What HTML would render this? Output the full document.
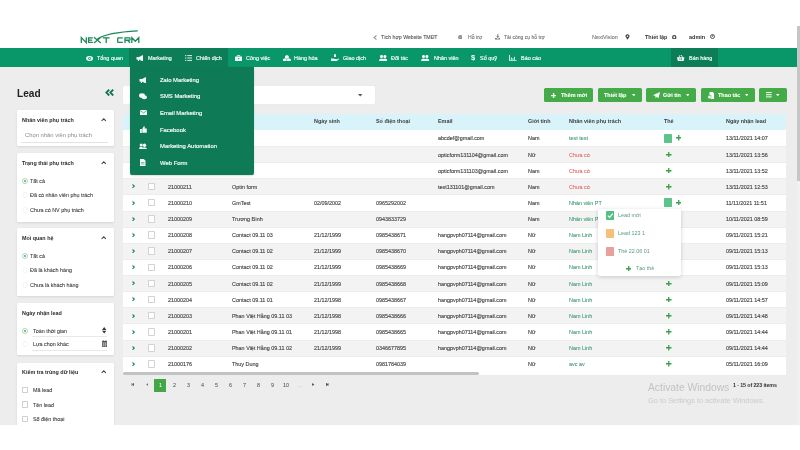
<!DOCTYPE html>
<html><head><meta charset="utf-8"><title>Lead</title>
<style>
html,body{margin:0;padding:0;}
body{width:800px;height:450px;overflow:hidden;position:relative;background:#fff;font-family:"Liberation Sans",sans-serif;}
.t{position:absolute;white-space:nowrap;line-height:1em;will-change:transform;}
.r{position:absolute;display:block;}
</style></head><body>
<div class="r" style="left:0.00px;top:26.00px;width:797.00px;height:22.00px;background:#fff;"></div>
<div class="r" style="left:0.00px;top:48.00px;width:797.00px;height:19.30px;background:#099668;"></div>
<div class="r" style="left:129.20px;top:48.00px;width:98.80px;height:19.30px;background:#0c7d57;"></div>
<div class="r" style="left:670.90px;top:48.00px;width:47.60px;height:19.30px;background:#0c7d57;"></div>
<div class="r" style="left:0.00px;top:67.30px;width:797.00px;height:357.30px;background:#ededed;"></div>
<div class="r" style="left:797.00px;top:26.00px;width:3.00px;height:398.60px;background:#f1f1f1;"></div>
<div class="r" style="left:797.30px;top:26.00px;width:2.70px;height:155.00px;background:#c6c6c6;"></div>
<svg class="r" style="left:78.00px;top:28.00px;" width="64" height="18" viewBox="0 0 64 18">
<path d="M19.8 10.8 Q 29 4.6 59.3 2.9" stroke="#1b8857" stroke-width="1.3" fill="none" stroke-linecap="round"/>
<g stroke="#1b8857" stroke-width="1.3" fill="none" transform="translate(0,9.3)">
<path d="M3.3 5.6 V0.3 L8.3 5.3 V0"/>
<path d="M14.8 0.55 H10.6 V5.05 H14.8 M10.6 2.8 H14.2"/>
<path d="M16 0 L22.8 5.6 M22.8 0 L16 5.6"/>
<path d="M24.8 0.55 H31.6 M28.2 0.55 V5.6"/>
<path d="M44.8 0.55 H40.4 Q39.7 0.55 39.7 1.2 V4.4 Q39.7 5.05 40.4 5.05 H44.8"/>
<path d="M47 5.6 V0.55 H51.3 Q52 0.55 52 1.2 V2.3 Q52 2.95 51.3 2.95 H47 M49.6 2.95 L52 5.6"/>
<path d="M53.8 5.6 V0.4 L57.3 4 L60.8 0.4 V5.6"/>
</g></svg>
<div class="t" style="left:380.60px;top:34.80px;font-size:5.2px;color:#5a5a5a;font-weight:400;-webkit-text-stroke:0.12px #5a5a5a;">Tích hợp Website TMĐT</div>
<svg class="r" style="left:372.50px;top:34.50px;" width="4" height="5" viewBox="0 0 4 5"><path d="M3.5 0.5 L1 2.5 L3.5 4.5" stroke="#999" stroke-width="1.1" fill="none"/></svg>
<svg class="r" style="left:457.80px;top:34.60px;" width="4.6" height="4.6" viewBox="0 0 4.6 4.6"><circle cx="2.3" cy="2.3" r="2.2" fill="#8d8d9c"/><path d="M1.2 2.4 H3.4" stroke="#c9c9d4" stroke-width="0.5"/></svg>
<div class="t" style="left:468.00px;top:34.88px;font-size:5.1px;color:#777;font-weight:400;-webkit-text-stroke:0.12px #777;">Hỗ trợ</div>
<svg class="r" style="left:494.60px;top:34.20px;" width="5.6" height="5.4" viewBox="0 0 5.6 5.4"><path d="M2.3 0 H3.3 V2.2 H4.5 L2.8 3.9 L1.1 2.2 H2.3 Z M0 3.9 H1.5 L2.8 5 L4.1 3.9 H5.6 V5.4 H0 Z" fill="#7a7a86"/></svg>
<div class="t" style="left:504.40px;top:34.93px;font-size:5.05px;color:#777;font-weight:400;-webkit-text-stroke:0.12px #777;">Tải công cụ hỗ trợ</div>
<div class="t" style="left:591.60px;top:34.63px;font-size:5.4px;color:#777;font-weight:400;-webkit-text-stroke:0.1px #777;">NextVision</div>
<svg class="r" style="left:624.50px;top:34.00px;" width="5" height="6" viewBox="0 0 5 6"><path d="M2.5 5.8 L0.6 2.8 A2 2 0 1 1 4.4 2.8 Z" fill="#444"/><circle cx="2.5" cy="2.2" r="0.8" fill="#fff"/></svg>
<div class="t" style="left:644.70px;top:34.59px;font-size:5.45px;color:#333;font-weight:700;">Thiết lập</div>
<svg class="r" style="left:672.00px;top:34.50px;" width="4.5" height="4.5" viewBox="0 0 4.5 4.5"><circle cx="2.25" cy="2.25" r="1.6" stroke="#444" stroke-width="1.2" fill="none"/></svg>
<div class="t" style="left:689.00px;top:34.54px;font-size:5.5px;color:#333;font-weight:700;">admin</div>
<svg class="r" style="left:709.50px;top:34.30px;" width="5" height="5" viewBox="0 0 5 5"><circle cx="2.5" cy="2.5" r="2" stroke="#444" stroke-width="0.9" fill="none"/><circle cx="2.5" cy="2" r="0.8" fill="#444"/></svg>
<div class="t" style="left:97.30px;top:55.79px;font-size:5.45px;color:#e9f8f0;font-weight:400;-webkit-text-stroke:0.2px #e9f8f0;">Tổng quan</div>
<div class="t" style="left:147.90px;top:55.79px;font-size:5.45px;color:#e9f8f0;font-weight:400;-webkit-text-stroke:0.2px #e9f8f0;">Marketing</div>
<div class="t" style="left:195.80px;top:55.79px;font-size:5.45px;color:#e9f8f0;font-weight:400;-webkit-text-stroke:0.2px #e9f8f0;">Chiến dịch</div>
<div class="t" style="left:245.60px;top:55.79px;font-size:5.45px;color:#e9f8f0;font-weight:400;-webkit-text-stroke:0.2px #e9f8f0;">Công việc</div>
<div class="t" style="left:293.50px;top:55.79px;font-size:5.45px;color:#e9f8f0;font-weight:400;-webkit-text-stroke:0.2px #e9f8f0;">Hàng hóa</div>
<div class="t" style="left:342.60px;top:55.79px;font-size:5.45px;color:#e9f8f0;font-weight:400;-webkit-text-stroke:0.2px #e9f8f0;">Giao dịch</div>
<div class="t" style="left:391.20px;top:55.79px;font-size:5.45px;color:#e9f8f0;font-weight:400;-webkit-text-stroke:0.2px #e9f8f0;">Đối tác</div>
<div class="t" style="left:433.90px;top:55.79px;font-size:5.45px;color:#e9f8f0;font-weight:400;-webkit-text-stroke:0.2px #e9f8f0;">Nhân viên</div>
<div class="t" style="left:479.80px;top:55.79px;font-size:5.45px;color:#e9f8f0;font-weight:400;-webkit-text-stroke:0.2px #e9f8f0;">Sổ quỹ</div>
<div class="t" style="left:520.50px;top:55.79px;font-size:5.45px;color:#e9f8f0;font-weight:400;-webkit-text-stroke:0.2px #e9f8f0;">Báo cáo</div>
<div class="t" style="left:688.75px;top:55.79px;font-size:5.45px;color:#e9f8f0;font-weight:400;-webkit-text-stroke:0.2px #e9f8f0;">Bán hàng</div>
<svg class="r" style="left:85.60px;top:55.60px;" width="7.2" height="5" viewBox="0 0 7.2 5"><ellipse cx="3.6" cy="2.5" rx="3.5" ry="2.4" fill="#f4fbf7"/><circle cx="3.6" cy="2.5" r="1.5" fill="#099668"/><circle cx="3.6" cy="2.5" r="0.8" fill="#f4fbf7"/></svg>
<svg class="r" style="left:136.10px;top:54.90px;" width="8" height="6.5" viewBox="0 0 8 6.5"><path d="M0.5 2 H3 L7 0 V6.5 L3 4.5 H0.5 Z M1.5 4.5 L2.3 6.5 H3.3 L2.8 4.5 Z" fill="#f4fbf7"/></svg>
<svg class="r" style="left:185.00px;top:54.90px;" width="7" height="6" viewBox="0 0 7 6"><path d="M0 0.6 H1.3 M2.3 0.6 H7 M0 3 H1.3 M2.3 3 H7 M0 5.4 H1.3 M2.3 5.4 H7" stroke="#f4fbf7" stroke-width="0.9"/></svg>
<svg class="r" style="left:234.80px;top:54.90px;" width="7.2" height="6.5" viewBox="0 0 7.2 6.5"><path d="M2.3 1.4 V0.5 H4.9 V1.4" stroke="#f4fbf7" stroke-width="0.8" fill="none"/><rect x="0" y="1.4" width="7.2" height="5" rx="0.6" fill="#f4fbf7"/><rect x="3" y="3.2" width="1.2" height="1" fill="#099668"/></svg>
<svg class="r" style="left:282.80px;top:54.60px;" width="7.8" height="6.8" viewBox="0 0 7.8 6.8"><path d="M3.9 0 L5.8 0.9 V2.9 L3.9 3.8 L2 2.9 V0.9 Z M1.9 3.2 L3.7 4 V6 L1.9 6.8 L0 6 V4 Z M5.9 3.2 L7.8 4 V6 L5.9 6.8 L4.1 6 V4 Z" fill="#f4fbf7"/></svg>
<svg class="r" style="left:330.50px;top:54.40px;" width="8.2" height="7.2" viewBox="0 0 8.2 7.2"><path d="M3.1 0.3 H5 V2.9 H3.1 Z" fill="#f4fbf7"/><path d="M0 4.4 H2.3 Q3.3 4.4 3.8 5 H5.3 Q6 5 5.9 5.6 L7.6 4.6 Q8.3 4.5 8 5.2 L5.8 7 H0 Z" fill="#f4fbf7"/></svg>
<svg class="r" style="left:378.70px;top:54.90px;" width="8.3" height="6.2" viewBox="0 0 8.3 6.2"><circle cx="2.5" cy="1.6" r="1.5" fill="#f4fbf7"/><circle cx="5.9" cy="1.6" r="1.5" fill="#f4fbf7"/><path d="M0 6.2 Q0 3.6 2.5 3.6 Q5 3.6 5 6.2 Z M3.5 6.2 Q3.5 3.6 5.9 3.6 Q8.3 3.6 8.3 6.2 Z" fill="#f4fbf7"/></svg>
<svg class="r" style="left:421.40px;top:54.90px;" width="8.3" height="6.2" viewBox="0 0 8.3 6.2"><circle cx="2.5" cy="1.6" r="1.5" fill="#f4fbf7"/><circle cx="5.9" cy="1.6" r="1.5" fill="#f4fbf7"/><path d="M0 6.2 Q0 3.6 2.5 3.6 Q5 3.6 5 6.2 Z M3.5 6.2 Q3.5 3.6 5.9 3.6 Q8.3 3.6 8.3 6.2 Z" fill="#f4fbf7"/></svg>
<div class="t" style="left:471.20px;top:54.47px;font-size:7.6px;color:#fff;font-weight:700;">$</div>
<svg class="r" style="left:508.90px;top:54.80px;" width="7.7" height="6.2" viewBox="0 0 7.7 6.2"><path d="M0.5 0 V5.7 H7.7" stroke="#f4fbf7" stroke-width="0.9" fill="none"/><path d="M2.3 4.8 V2.6 M3.9 4.8 V3.3 M5.5 4.8 V1.8" stroke="#f4fbf7" stroke-width="1"/></svg>
<svg class="r" style="left:677.00px;top:54.90px;" width="7.5" height="6.2" viewBox="0 0 7.5 6.2"><path d="M0 2.3 H7.5 L6.6 6.2 H0.9 Z" fill="#f4fbf7"/><path d="M1.8 2.5 L3.2 0 M5.7 2.5 L4.3 0" stroke="#f4fbf7" stroke-width="0.8"/><rect x="2.6" y="3.3" width="0.7" height="1.8" fill="#0c7d57"/><rect x="4.2" y="3.3" width="0.7" height="1.8" fill="#0c7d57"/></svg>
<div class="t" style="left:16.90px;top:88.75px;font-size:10.1px;color:#222;font-weight:700;">Lead</div>
<svg class="r" style="left:104.80px;top:89.30px;" width="9" height="7.2" viewBox="0 0 9 7.2"><path d="M4.2 0.7 L1.4 3.6 L4.2 6.5 M8.2 0.7 L5.4 3.6 L8.2 6.5" stroke="#127452" stroke-width="1.9" fill="none"/></svg>
<div class="r" style="left:16.75px;top:110.00px;width:96.85px;height:36.40px;background:#fff;border-radius:1.5px;box-shadow:0 1px 2.5px rgba(0,0,0,0.10)"></div>
<div class="r" style="left:16.75px;top:153.00px;width:96.85px;height:68.80px;background:#fff;border-radius:1.5px;box-shadow:0 1px 2.5px rgba(0,0,0,0.10)"></div>
<div class="r" style="left:16.75px;top:228.40px;width:96.85px;height:68.00px;background:#fff;border-radius:1.5px;box-shadow:0 1px 2.5px rgba(0,0,0,0.10)"></div>
<div class="r" style="left:16.75px;top:303.40px;width:96.85px;height:52.00px;background:#fff;border-radius:1.5px;box-shadow:0 1px 2.5px rgba(0,0,0,0.10)"></div>
<div class="r" style="left:16.75px;top:362.80px;width:96.85px;height:77.20px;background:#fff;border-radius:1.5px;box-shadow:0 1px 2.5px rgba(0,0,0,0.10)"></div>
<div class="t" style="left:22.00px;top:117.93px;font-size:5.4px;color:#2a2a2a;font-weight:700;">Nhân viên phụ trách</div>
<svg class="r" style="left:100.50px;top:118.30px;" width="5.5" height="3.5" viewBox="0 0 5.5 3.5"><path d="M0.6 3 L2.75 0.8 L4.9 3" stroke="#444" stroke-width="1.05" fill="none"/></svg>
<div class="t" style="left:22.00px;top:161.03px;font-size:5.4px;color:#2a2a2a;font-weight:700;">Trạng thái phụ trách</div>
<svg class="r" style="left:100.50px;top:161.40px;" width="5.5" height="3.5" viewBox="0 0 5.5 3.5"><path d="M0.6 3 L2.75 0.8 L4.9 3" stroke="#444" stroke-width="1.05" fill="none"/></svg>
<div class="t" style="left:22.00px;top:235.83px;font-size:5.4px;color:#2a2a2a;font-weight:700;">Mối quan hệ</div>
<svg class="r" style="left:100.50px;top:236.20px;" width="5.5" height="3.5" viewBox="0 0 5.5 3.5"><path d="M0.6 3 L2.75 0.8 L4.9 3" stroke="#444" stroke-width="1.05" fill="none"/></svg>
<div class="t" style="left:22.00px;top:310.63px;font-size:5.4px;color:#2a2a2a;font-weight:700;">Ngày nhận lead</div>
<div class="t" style="left:22.00px;top:369.83px;font-size:5.4px;color:#2a2a2a;font-weight:700;">Kiểm tra trùng dữ liệu</div>
<svg class="r" style="left:100.50px;top:370.20px;" width="5.5" height="3.5" viewBox="0 0 5.5 3.5"><path d="M0.6 3 L2.75 0.8 L4.9 3" stroke="#444" stroke-width="1.05" fill="none"/></svg>
<div class="t" style="left:24.90px;top:133.35px;font-size:5.85px;color:#8a8a8a;font-weight:400;">Chọn nhân viên phụ trách</div>
<div class="r" style="left:21.30px;top:142.00px;width:87.10px;height:0.50px;background:#e3e3e3;"></div>
<svg class="r" style="left:22.00px;top:177.60px;" width="6" height="6" viewBox="0 0 6 6"><circle cx="3" cy="3" r="2.5" stroke="#8bc79c" stroke-width="0.7" fill="#fff"/><circle cx="3" cy="3" r="0.9" fill="#4a9a63"/></svg>
<div class="t" style="left:29.90px;top:178.53px;font-size:5.4px;color:#3a3a3a;font-weight:400;-webkit-text-stroke:0.08px #3a3a3a;">Tất cả</div>
<svg class="r" style="left:22.00px;top:192.30px;" width="6" height="6" viewBox="0 0 6 6"><circle cx="3" cy="3" r="2.5" stroke="#ececec" stroke-width="0.6" fill="#fff"/></svg>
<div class="t" style="left:29.90px;top:193.23px;font-size:5.4px;color:#3a3a3a;font-weight:400;-webkit-text-stroke:0.08px #3a3a3a;">Đã có nhân viên phụ trách</div>
<svg class="r" style="left:22.00px;top:206.90px;" width="6" height="6" viewBox="0 0 6 6"><circle cx="3" cy="3" r="2.5" stroke="#ececec" stroke-width="0.6" fill="#fff"/></svg>
<div class="t" style="left:29.90px;top:207.83px;font-size:5.4px;color:#3a3a3a;font-weight:400;-webkit-text-stroke:0.08px #3a3a3a;">Chưa có NV phụ trách</div>
<svg class="r" style="left:22.00px;top:252.60px;" width="6" height="6" viewBox="0 0 6 6"><circle cx="3" cy="3" r="2.5" stroke="#8bc79c" stroke-width="0.7" fill="#fff"/><circle cx="3" cy="3" r="0.9" fill="#4a9a63"/></svg>
<div class="t" style="left:29.90px;top:253.53px;font-size:5.4px;color:#3a3a3a;font-weight:400;-webkit-text-stroke:0.08px #3a3a3a;">Tất cả</div>
<svg class="r" style="left:22.00px;top:267.30px;" width="6" height="6" viewBox="0 0 6 6"><circle cx="3" cy="3" r="2.5" stroke="#ececec" stroke-width="0.6" fill="#fff"/></svg>
<div class="t" style="left:29.90px;top:268.23px;font-size:5.4px;color:#3a3a3a;font-weight:400;-webkit-text-stroke:0.08px #3a3a3a;">Đã là khách hàng</div>
<svg class="r" style="left:22.00px;top:281.90px;" width="6" height="6" viewBox="0 0 6 6"><circle cx="3" cy="3" r="2.5" stroke="#ececec" stroke-width="0.6" fill="#fff"/></svg>
<div class="t" style="left:29.90px;top:282.83px;font-size:5.4px;color:#3a3a3a;font-weight:400;-webkit-text-stroke:0.08px #3a3a3a;">Chưa là khách hàng</div>
<svg class="r" style="left:22.00px;top:327.60px;" width="6" height="6" viewBox="0 0 6 6"><circle cx="3" cy="3" r="2.5" stroke="#8bc79c" stroke-width="0.7" fill="#fff"/><circle cx="3" cy="3" r="0.9" fill="#4a9a63"/></svg>
<div class="t" style="left:33.10px;top:328.53px;font-size:5.4px;color:#3a3a3a;font-weight:400;-webkit-text-stroke:0.08px #3a3a3a;">Toàn thời gian</div>
<svg class="r" style="left:22.00px;top:340.90px;" width="6" height="6" viewBox="0 0 6 6"><circle cx="3" cy="3" r="2.5" stroke="#ececec" stroke-width="0.6" fill="#fff"/></svg>
<div class="t" style="left:33.10px;top:341.83px;font-size:5.4px;color:#3a3a3a;font-weight:400;-webkit-text-stroke:0.08px #3a3a3a;">Lựa chọn khác</div>
<div class="r" style="left:32.20px;top:336.00px;width:75.20px;height:0.50px;background:#e8e8e8;"></div>
<div class="r" style="left:32.20px;top:349.60px;width:75.20px;height:0.50px;background:#e8e8e8;"></div>
<svg class="r" style="left:102.20px;top:327.40px;" width="4.4" height="6.6" viewBox="0 0 4.4 6.6"><path d="M0 2.9 L2.2 0 L4.4 2.9 Z M0 3.7 L2.2 6.6 L4.4 3.7 Z" fill="#3a3a3a"/></svg>
<svg class="r" style="left:102.20px;top:340.20px;" width="5.2" height="7" viewBox="0 0 5.2 7"><rect x="0" y="1" width="5.2" height="6" fill="#555"/><path d="M0 3 H5.2 M0 5 H5.2 M1.7 2.5 V7 M3.5 2.5 V7" stroke="#fff" stroke-width="0.4"/><path d="M1.3 0 V1.5 M3.9 0 V1.5" stroke="#555" stroke-width="0.7"/></svg>
<div class="r" style="left:21.70px;top:386.60px;width:6.70px;height:6.80px;background:#fff;box-sizing:border-box;border:0.6px solid #cfcfcf;border-radius:0.8px"></div>
<div class="t" style="left:32.50px;top:387.93px;font-size:5.4px;color:#3a3a3a;font-weight:400;-webkit-text-stroke:0.08px #3a3a3a;">Mã lead</div>
<div class="r" style="left:21.70px;top:401.40px;width:6.70px;height:6.80px;background:#fff;box-sizing:border-box;border:0.6px solid #cfcfcf;border-radius:0.8px"></div>
<div class="t" style="left:32.50px;top:402.73px;font-size:5.4px;color:#3a3a3a;font-weight:400;-webkit-text-stroke:0.08px #3a3a3a;">Tên lead</div>
<div class="r" style="left:21.70px;top:415.70px;width:6.70px;height:6.80px;background:#fff;box-sizing:border-box;border:0.6px solid #cfcfcf;border-radius:0.8px"></div>
<div class="t" style="left:32.50px;top:417.03px;font-size:5.4px;color:#3a3a3a;font-weight:400;-webkit-text-stroke:0.08px #3a3a3a;">Số điện thoại</div>
<div class="r" style="left:123.00px;top:85.60px;width:252.00px;height:18.00px;background:#fff;border-radius:1.5px;box-shadow:0 0 0.8px rgba(0,0,0,0.12)"></div>
<svg class="r" style="left:358.30px;top:94.00px;" width="4.4" height="2.6" viewBox="0 0 4.4 2.6"><path d="M0 0 H4.4 L2.2 2.6 Z" fill="#555"/></svg>
<div class="r" style="left:544.40px;top:88.00px;width:48.50px;height:13.80px;background:#45ab49;border-radius:1.6px"></div>
<svg class="r" style="left:551.20px;top:92.60px;" width="5.2" height="5.2" viewBox="0 0 5.2 5.2"><path d="M2.6 0 V5.2 M0 2.6 H5.2" stroke="#fff" stroke-width="1.4"/></svg>
<div class="t" style="left:561.30px;top:93.29px;font-size:5.45px;color:#fff;font-weight:700;-webkit-text-stroke:0.08px #fff;">Thêm mới</div>
<div class="r" style="left:597.75px;top:88.00px;width:43.75px;height:13.80px;background:#45ab49;border-radius:1.6px"></div>
<div class="t" style="left:604.40px;top:93.29px;font-size:5.45px;color:#fff;font-weight:700;-webkit-text-stroke:0.08px #fff;">Thiết lập</div>
<svg class="r" style="left:631.50px;top:94.20px;" width="3.6" height="2.2" viewBox="0 0 3.6 2.2"><path d="M0 0 H3.6 L1.8 2.2 Z" fill="#fff"/></svg>
<div class="r" style="left:646.20px;top:88.00px;width:49.70px;height:13.80px;background:#45ab49;border-radius:1.6px"></div>
<svg class="r" style="left:652.50px;top:91.80px;" width="7" height="6.5" viewBox="0 0 7 6.5"><path d="M7 0 L0 3.3 L2.4 4 L2.6 6.5 L3.8 4.8 L5.5 6.2 Z" fill="#fff"/></svg>
<div class="t" style="left:663.00px;top:93.29px;font-size:5.45px;color:#fff;font-weight:700;-webkit-text-stroke:0.08px #fff;">Gửi tin</div>
<svg class="r" style="left:685.60px;top:94.20px;" width="3.6" height="2.2" viewBox="0 0 3.6 2.2"><path d="M0 0 H3.6 L1.8 2.2 Z" fill="#fff"/></svg>
<div class="r" style="left:700.50px;top:88.00px;width:54.30px;height:13.80px;background:#45ab49;border-radius:1.6px"></div>
<svg class="r" style="left:707.70px;top:91.50px;" width="6.5" height="7.5" viewBox="0 0 6.5 7.5"><path d="M1.5 0 H4.8 L6.3 1.5 V7.5 H1.5 Z" fill="#fff"/><rect x="0" y="3.5" width="3" height="3" fill="#fff" stroke="#45ab49" stroke-width="0.5"/></svg>
<div class="t" style="left:718.00px;top:93.29px;font-size:5.45px;color:#fff;font-weight:700;-webkit-text-stroke:0.08px #fff;">Thao tác</div>
<svg class="r" style="left:744.50px;top:94.20px;" width="3.6" height="2.2" viewBox="0 0 3.6 2.2"><path d="M0 0 H3.6 L1.8 2.2 Z" fill="#fff"/></svg>
<div class="r" style="left:759.40px;top:88.00px;width:27.30px;height:13.80px;background:#45ab49;border-radius:1.6px"></div>
<svg class="r" style="left:765.90px;top:92.30px;" width="5.7" height="5.5" viewBox="0 0 5.7 5.5"><path d="M0 0.6 H5.7 M0 2.75 H5.7 M0 4.9 H5.7" stroke="#fff" stroke-width="1"/></svg>
<svg class="r" style="left:776.30px;top:94.20px;" width="3.6" height="2.2" viewBox="0 0 3.6 2.2"><path d="M0 0 H3.6 L1.8 2.2 Z" fill="#fff"/></svg>
<div class="r" style="left:123.00px;top:113.50px;width:663.25px;height:261.50px;background:#fff;"></div>
<div class="r" style="left:123.00px;top:113.50px;width:663.25px;height:16.70px;background:#d9f3fb;"></div>
<div class="t" style="left:168.00px;top:119.21px;font-size:5.42px;color:#3c3c3c;font-weight:700;">Mã lead</div>
<div class="t" style="left:231.75px;top:119.21px;font-size:5.42px;color:#3c3c3c;font-weight:700;">Tên lead</div>
<div class="t" style="left:313.75px;top:119.21px;font-size:5.42px;color:#3c3c3c;font-weight:700;">Ngày sinh</div>
<div class="t" style="left:376.25px;top:119.21px;font-size:5.42px;color:#3c3c3c;font-weight:700;">Số điện thoại</div>
<div class="t" style="left:437.50px;top:119.21px;font-size:5.42px;color:#3c3c3c;font-weight:700;">Email</div>
<div class="t" style="left:528.25px;top:119.21px;font-size:5.42px;color:#3c3c3c;font-weight:700;">Giới tính</div>
<div class="t" style="left:569.25px;top:119.21px;font-size:5.42px;color:#3c3c3c;font-weight:700;">Nhân viên phụ trách</div>
<div class="t" style="left:663.75px;top:119.21px;font-size:5.42px;color:#3c3c3c;font-weight:700;">Thẻ</div>
<div class="t" style="left:725.75px;top:119.21px;font-size:5.42px;color:#3c3c3c;font-weight:700;">Ngày nhận lead</div>
<svg class="r" style="left:131.80px;top:136.06px;" width="3" height="4.4" viewBox="0 0 3 4.4"><path d="M0.5 0.5 L2.3 2.2 L0.5 3.9" stroke="#23806b" stroke-width="1.1" fill="none"/></svg>
<div class="r" style="left:147.50px;top:134.56px;width:7.50px;height:7.40px;background:#fff;box-sizing:border-box;border:0.6px solid #d3d3d3;border-radius:0.8px"></div>
<div class="t" style="left:167.50px;top:136.38px;font-size:5.42px;color:#444444;font-weight:400;-webkit-text-stroke:0.13px #444444;">21000213</div>
<div class="t" style="left:231.75px;top:136.38px;font-size:5.42px;color:#444444;font-weight:400;-webkit-text-stroke:0.13px #444444;">Optic</div>
<div class="t" style="left:437.50px;top:136.38px;font-size:5.42px;color:#444444;font-weight:400;-webkit-text-stroke:0.13px #444444;">abcdef@gmail.com</div>
<div class="t" style="left:528.25px;top:136.38px;font-size:5.42px;color:#444444;font-weight:400;-webkit-text-stroke:0.13px #444444;">Nam</div>
<div class="t" style="left:569.25px;top:136.38px;font-size:5.42px;color:#3f9a70;font-weight:400;-webkit-text-stroke:0.08px #3f9a70;">test test</div>
<div class="r" style="left:664.20px;top:133.96px;width:8.20px;height:8.60px;background:#5cc48a;border-radius:0.8px"></div>
<svg class="r" style="left:675.80px;top:135.26px;" width="5.5" height="5.5" viewBox="0 0 5.5 5.5"><path d="M2.75 0 V5.5 M0 2.75 H5.5" stroke="#3aa04a" stroke-width="1.3"/></svg>
<div class="t" style="left:725.75px;top:136.38px;font-size:5.42px;color:#444444;font-weight:400;-webkit-text-stroke:0.13px #444444;">13/11/2021 14:07</div>
<div class="r" style="left:123.00px;top:146.33px;width:663.25px;height:16.13px;background:#f3f3f3;"></div>
<div class="r" style="left:123.00px;top:146.03px;width:663.25px;height:0.80px;background:#ededed;"></div>
<svg class="r" style="left:131.80px;top:152.19px;" width="3" height="4.4" viewBox="0 0 3 4.4"><path d="M0.5 0.5 L2.3 2.2 L0.5 3.9" stroke="#23806b" stroke-width="1.1" fill="none"/></svg>
<div class="r" style="left:147.50px;top:150.69px;width:7.50px;height:7.40px;background:#fff;box-sizing:border-box;border:0.6px solid #d3d3d3;border-radius:0.8px"></div>
<div class="t" style="left:167.50px;top:152.51px;font-size:5.42px;color:#444444;font-weight:400;-webkit-text-stroke:0.13px #444444;">21000212</div>
<div class="t" style="left:231.75px;top:152.51px;font-size:5.42px;color:#444444;font-weight:400;-webkit-text-stroke:0.13px #444444;">Optic</div>
<div class="t" style="left:437.50px;top:152.51px;font-size:5.42px;color:#444444;font-weight:400;-webkit-text-stroke:0.13px #444444;">opticform131104@gmail.com</div>
<div class="t" style="left:528.25px;top:152.51px;font-size:5.42px;color:#444444;font-weight:400;-webkit-text-stroke:0.13px #444444;">Nữ</div>
<div class="t" style="left:569.25px;top:152.51px;font-size:5.42px;color:#e06a6a;font-weight:400;-webkit-text-stroke:0.08px #e06a6a;">Chưa có</div>
<svg class="r" style="left:666.20px;top:151.79px;" width="5.5" height="5.5" viewBox="0 0 5.5 5.5"><path d="M2.75 0 V5.5 M0 2.75 H5.5" stroke="#3aa04a" stroke-width="1.3"/></svg>
<div class="t" style="left:725.75px;top:152.51px;font-size:5.42px;color:#444444;font-weight:400;-webkit-text-stroke:0.13px #444444;">13/11/2021 13:56</div>
<div class="r" style="left:123.00px;top:162.16px;width:663.25px;height:0.80px;background:#ededed;"></div>
<svg class="r" style="left:131.80px;top:168.32px;" width="3" height="4.4" viewBox="0 0 3 4.4"><path d="M0.5 0.5 L2.3 2.2 L0.5 3.9" stroke="#23806b" stroke-width="1.1" fill="none"/></svg>
<div class="r" style="left:147.50px;top:166.82px;width:7.50px;height:7.40px;background:#fff;box-sizing:border-box;border:0.6px solid #d3d3d3;border-radius:0.8px"></div>
<div class="t" style="left:167.50px;top:168.64px;font-size:5.42px;color:#444444;font-weight:400;-webkit-text-stroke:0.13px #444444;">21000212</div>
<div class="t" style="left:231.75px;top:168.64px;font-size:5.42px;color:#444444;font-weight:400;-webkit-text-stroke:0.13px #444444;">Optic</div>
<div class="t" style="left:437.50px;top:168.64px;font-size:5.42px;color:#444444;font-weight:400;-webkit-text-stroke:0.13px #444444;">opticform131103@gmail.com</div>
<div class="t" style="left:528.25px;top:168.64px;font-size:5.42px;color:#444444;font-weight:400;-webkit-text-stroke:0.13px #444444;">Nam</div>
<div class="t" style="left:569.25px;top:168.64px;font-size:5.42px;color:#e06a6a;font-weight:400;-webkit-text-stroke:0.08px #e06a6a;">Chưa có</div>
<svg class="r" style="left:666.20px;top:167.92px;" width="5.5" height="5.5" viewBox="0 0 5.5 5.5"><path d="M2.75 0 V5.5 M0 2.75 H5.5" stroke="#3aa04a" stroke-width="1.3"/></svg>
<div class="t" style="left:725.75px;top:168.64px;font-size:5.42px;color:#444444;font-weight:400;-webkit-text-stroke:0.13px #444444;">13/11/2021 13:52</div>
<div class="r" style="left:123.00px;top:178.59px;width:663.25px;height:16.13px;background:#f3f3f3;"></div>
<div class="r" style="left:123.00px;top:178.29px;width:663.25px;height:0.80px;background:#ededed;"></div>
<svg class="r" style="left:131.80px;top:184.45px;" width="3" height="4.4" viewBox="0 0 3 4.4"><path d="M0.5 0.5 L2.3 2.2 L0.5 3.9" stroke="#23806b" stroke-width="1.1" fill="none"/></svg>
<div class="r" style="left:147.50px;top:182.95px;width:7.50px;height:7.40px;background:#fff;box-sizing:border-box;border:0.6px solid #d3d3d3;border-radius:0.8px"></div>
<div class="t" style="left:167.50px;top:184.77px;font-size:5.42px;color:#444444;font-weight:400;-webkit-text-stroke:0.13px #444444;">21000211</div>
<div class="t" style="left:231.75px;top:184.77px;font-size:5.42px;color:#444444;font-weight:400;-webkit-text-stroke:0.13px #444444;">Optin form</div>
<div class="t" style="left:437.50px;top:184.77px;font-size:5.42px;color:#444444;font-weight:400;-webkit-text-stroke:0.13px #444444;">test131101@gmail.com</div>
<div class="t" style="left:528.25px;top:184.77px;font-size:5.42px;color:#444444;font-weight:400;-webkit-text-stroke:0.13px #444444;">Nam</div>
<div class="t" style="left:569.25px;top:184.77px;font-size:5.42px;color:#e06a6a;font-weight:400;-webkit-text-stroke:0.08px #e06a6a;">Chưa có</div>
<svg class="r" style="left:666.20px;top:184.05px;" width="5.5" height="5.5" viewBox="0 0 5.5 5.5"><path d="M2.75 0 V5.5 M0 2.75 H5.5" stroke="#3aa04a" stroke-width="1.3"/></svg>
<div class="t" style="left:725.75px;top:184.77px;font-size:5.42px;color:#444444;font-weight:400;-webkit-text-stroke:0.13px #444444;">13/11/2021 12:53</div>
<div class="r" style="left:123.00px;top:194.42px;width:663.25px;height:0.80px;background:#ededed;"></div>
<svg class="r" style="left:131.80px;top:200.58px;" width="3" height="4.4" viewBox="0 0 3 4.4"><path d="M0.5 0.5 L2.3 2.2 L0.5 3.9" stroke="#23806b" stroke-width="1.1" fill="none"/></svg>
<div class="r" style="left:147.50px;top:199.08px;width:7.50px;height:7.40px;background:#fff;box-sizing:border-box;border:0.6px solid #d3d3d3;border-radius:0.8px"></div>
<div class="t" style="left:167.50px;top:200.90px;font-size:5.42px;color:#444444;font-weight:400;-webkit-text-stroke:0.13px #444444;">21000210</div>
<div class="t" style="left:231.75px;top:200.90px;font-size:5.42px;color:#444444;font-weight:400;-webkit-text-stroke:0.13px #444444;">GmTest</div>
<div class="t" style="left:313.75px;top:200.90px;font-size:5.42px;color:#444444;font-weight:400;-webkit-text-stroke:0.13px #444444;">02/09/2002</div>
<div class="t" style="left:376.25px;top:200.90px;font-size:5.42px;color:#444444;font-weight:400;-webkit-text-stroke:0.13px #444444;">0965292002</div>
<div class="t" style="left:528.25px;top:200.90px;font-size:5.42px;color:#444444;font-weight:400;-webkit-text-stroke:0.13px #444444;">Nam</div>
<div class="t" style="left:569.25px;top:200.90px;font-size:5.42px;color:#3f9a70;font-weight:400;-webkit-text-stroke:0.08px #3f9a70;">Nhân viên PT</div>
<div class="r" style="left:664.20px;top:198.48px;width:8.20px;height:8.60px;background:#5cc48a;border-radius:0.8px"></div>
<svg class="r" style="left:675.80px;top:199.78px;" width="5.5" height="5.5" viewBox="0 0 5.5 5.5"><path d="M2.75 0 V5.5 M0 2.75 H5.5" stroke="#3aa04a" stroke-width="1.3"/></svg>
<div class="t" style="left:725.75px;top:200.90px;font-size:5.42px;color:#444444;font-weight:400;-webkit-text-stroke:0.13px #444444;">11/11/2021 11:51</div>
<div class="r" style="left:123.00px;top:210.85px;width:663.25px;height:16.13px;background:#f3f3f3;"></div>
<div class="r" style="left:123.00px;top:210.55px;width:663.25px;height:0.80px;background:#ededed;"></div>
<svg class="r" style="left:131.80px;top:216.71px;" width="3" height="4.4" viewBox="0 0 3 4.4"><path d="M0.5 0.5 L2.3 2.2 L0.5 3.9" stroke="#23806b" stroke-width="1.1" fill="none"/></svg>
<div class="r" style="left:147.50px;top:215.21px;width:7.50px;height:7.40px;background:#fff;box-sizing:border-box;border:0.6px solid #d3d3d3;border-radius:0.8px"></div>
<div class="t" style="left:167.50px;top:217.03px;font-size:5.42px;color:#444444;font-weight:400;-webkit-text-stroke:0.13px #444444;">21000209</div>
<div class="t" style="left:231.75px;top:217.03px;font-size:5.42px;color:#444444;font-weight:400;-webkit-text-stroke:0.13px #444444;">Trương Bình</div>
<div class="t" style="left:376.25px;top:217.03px;font-size:5.42px;color:#444444;font-weight:400;-webkit-text-stroke:0.13px #444444;">0943833729</div>
<div class="t" style="left:528.25px;top:217.03px;font-size:5.42px;color:#444444;font-weight:400;-webkit-text-stroke:0.13px #444444;">Nam</div>
<div class="t" style="left:569.25px;top:217.03px;font-size:5.42px;color:#3f9a70;font-weight:400;-webkit-text-stroke:0.08px #3f9a70;">Nhân viên PT</div>
<svg class="r" style="left:666.20px;top:216.31px;" width="5.5" height="5.5" viewBox="0 0 5.5 5.5"><path d="M2.75 0 V5.5 M0 2.75 H5.5" stroke="#3aa04a" stroke-width="1.3"/></svg>
<div class="t" style="left:725.75px;top:217.03px;font-size:5.42px;color:#444444;font-weight:400;-webkit-text-stroke:0.13px #444444;">10/11/2021 08:59</div>
<div class="r" style="left:123.00px;top:226.68px;width:663.25px;height:0.80px;background:#ededed;"></div>
<svg class="r" style="left:131.80px;top:232.84px;" width="3" height="4.4" viewBox="0 0 3 4.4"><path d="M0.5 0.5 L2.3 2.2 L0.5 3.9" stroke="#23806b" stroke-width="1.1" fill="none"/></svg>
<div class="r" style="left:147.50px;top:231.34px;width:7.50px;height:7.40px;background:#fff;box-sizing:border-box;border:0.6px solid #d3d3d3;border-radius:0.8px"></div>
<div class="t" style="left:167.50px;top:233.16px;font-size:5.42px;color:#444444;font-weight:400;-webkit-text-stroke:0.13px #444444;">21000208</div>
<div class="t" style="left:231.75px;top:233.16px;font-size:5.42px;color:#444444;font-weight:400;-webkit-text-stroke:0.13px #444444;">Contact 09.11 03</div>
<div class="t" style="left:313.75px;top:233.16px;font-size:5.42px;color:#444444;font-weight:400;-webkit-text-stroke:0.13px #444444;">21/12/1999</div>
<div class="t" style="left:376.25px;top:233.16px;font-size:5.42px;color:#444444;font-weight:400;-webkit-text-stroke:0.13px #444444;">0985438671</div>
<div class="t" style="left:437.50px;top:233.16px;font-size:5.42px;color:#444444;font-weight:400;-webkit-text-stroke:0.13px #444444;">hangpvph07114@gmail.com</div>
<div class="t" style="left:528.25px;top:233.16px;font-size:5.42px;color:#444444;font-weight:400;-webkit-text-stroke:0.13px #444444;">Nữ</div>
<div class="t" style="left:569.25px;top:233.16px;font-size:5.42px;color:#3f9a70;font-weight:400;-webkit-text-stroke:0.08px #3f9a70;">Nam Linh</div>
<svg class="r" style="left:666.20px;top:232.44px;" width="5.5" height="5.5" viewBox="0 0 5.5 5.5"><path d="M2.75 0 V5.5 M0 2.75 H5.5" stroke="#3aa04a" stroke-width="1.3"/></svg>
<div class="t" style="left:725.75px;top:233.16px;font-size:5.42px;color:#444444;font-weight:400;-webkit-text-stroke:0.13px #444444;">09/11/2021 15:21</div>
<div class="r" style="left:123.00px;top:243.11px;width:663.25px;height:16.13px;background:#f3f3f3;"></div>
<div class="r" style="left:123.00px;top:242.81px;width:663.25px;height:0.80px;background:#ededed;"></div>
<svg class="r" style="left:131.80px;top:248.97px;" width="3" height="4.4" viewBox="0 0 3 4.4"><path d="M0.5 0.5 L2.3 2.2 L0.5 3.9" stroke="#23806b" stroke-width="1.1" fill="none"/></svg>
<div class="r" style="left:147.50px;top:247.47px;width:7.50px;height:7.40px;background:#fff;box-sizing:border-box;border:0.6px solid #d3d3d3;border-radius:0.8px"></div>
<div class="t" style="left:167.50px;top:249.29px;font-size:5.42px;color:#444444;font-weight:400;-webkit-text-stroke:0.13px #444444;">21000207</div>
<div class="t" style="left:231.75px;top:249.29px;font-size:5.42px;color:#444444;font-weight:400;-webkit-text-stroke:0.13px #444444;">Contact 09.11 02</div>
<div class="t" style="left:313.75px;top:249.29px;font-size:5.42px;color:#444444;font-weight:400;-webkit-text-stroke:0.13px #444444;">21/12/1999</div>
<div class="t" style="left:376.25px;top:249.29px;font-size:5.42px;color:#444444;font-weight:400;-webkit-text-stroke:0.13px #444444;">0985438670</div>
<div class="t" style="left:437.50px;top:249.29px;font-size:5.42px;color:#444444;font-weight:400;-webkit-text-stroke:0.13px #444444;">hangpvph07114@gmail.com</div>
<div class="t" style="left:528.25px;top:249.29px;font-size:5.42px;color:#444444;font-weight:400;-webkit-text-stroke:0.13px #444444;">Nữ</div>
<div class="t" style="left:569.25px;top:249.29px;font-size:5.42px;color:#3f9a70;font-weight:400;-webkit-text-stroke:0.08px #3f9a70;">Nam Linh</div>
<svg class="r" style="left:666.20px;top:248.57px;" width="5.5" height="5.5" viewBox="0 0 5.5 5.5"><path d="M2.75 0 V5.5 M0 2.75 H5.5" stroke="#3aa04a" stroke-width="1.3"/></svg>
<div class="t" style="left:725.75px;top:249.29px;font-size:5.42px;color:#444444;font-weight:400;-webkit-text-stroke:0.13px #444444;">09/11/2021 15:13</div>
<div class="r" style="left:123.00px;top:258.94px;width:663.25px;height:0.80px;background:#ededed;"></div>
<svg class="r" style="left:131.80px;top:265.11px;" width="3" height="4.4" viewBox="0 0 3 4.4"><path d="M0.5 0.5 L2.3 2.2 L0.5 3.9" stroke="#23806b" stroke-width="1.1" fill="none"/></svg>
<div class="r" style="left:147.50px;top:263.61px;width:7.50px;height:7.40px;background:#fff;box-sizing:border-box;border:0.6px solid #d3d3d3;border-radius:0.8px"></div>
<div class="t" style="left:167.50px;top:265.42px;font-size:5.42px;color:#444444;font-weight:400;-webkit-text-stroke:0.13px #444444;">21000206</div>
<div class="t" style="left:231.75px;top:265.42px;font-size:5.42px;color:#444444;font-weight:400;-webkit-text-stroke:0.13px #444444;">Contact 09.11 02</div>
<div class="t" style="left:313.75px;top:265.42px;font-size:5.42px;color:#444444;font-weight:400;-webkit-text-stroke:0.13px #444444;">21/12/1999</div>
<div class="t" style="left:376.25px;top:265.42px;font-size:5.42px;color:#444444;font-weight:400;-webkit-text-stroke:0.13px #444444;">0985438669</div>
<div class="t" style="left:437.50px;top:265.42px;font-size:5.42px;color:#444444;font-weight:400;-webkit-text-stroke:0.13px #444444;">hangpvph07114@gmail.com</div>
<div class="t" style="left:528.25px;top:265.42px;font-size:5.42px;color:#444444;font-weight:400;-webkit-text-stroke:0.13px #444444;">Nữ</div>
<div class="t" style="left:569.25px;top:265.42px;font-size:5.42px;color:#3f9a70;font-weight:400;-webkit-text-stroke:0.08px #3f9a70;">Nam Linh</div>
<svg class="r" style="left:666.20px;top:264.70px;" width="5.5" height="5.5" viewBox="0 0 5.5 5.5"><path d="M2.75 0 V5.5 M0 2.75 H5.5" stroke="#3aa04a" stroke-width="1.3"/></svg>
<div class="t" style="left:725.75px;top:265.42px;font-size:5.42px;color:#444444;font-weight:400;-webkit-text-stroke:0.13px #444444;">09/11/2021 15:13</div>
<div class="r" style="left:123.00px;top:275.37px;width:663.25px;height:16.13px;background:#f3f3f3;"></div>
<div class="r" style="left:123.00px;top:275.07px;width:663.25px;height:0.80px;background:#ededed;"></div>
<svg class="r" style="left:131.80px;top:281.24px;" width="3" height="4.4" viewBox="0 0 3 4.4"><path d="M0.5 0.5 L2.3 2.2 L0.5 3.9" stroke="#23806b" stroke-width="1.1" fill="none"/></svg>
<div class="r" style="left:147.50px;top:279.74px;width:7.50px;height:7.40px;background:#fff;box-sizing:border-box;border:0.6px solid #d3d3d3;border-radius:0.8px"></div>
<div class="t" style="left:167.50px;top:281.55px;font-size:5.42px;color:#444444;font-weight:400;-webkit-text-stroke:0.13px #444444;">21000205</div>
<div class="t" style="left:231.75px;top:281.55px;font-size:5.42px;color:#444444;font-weight:400;-webkit-text-stroke:0.13px #444444;">Contact 09.11 02</div>
<div class="t" style="left:313.75px;top:281.55px;font-size:5.42px;color:#444444;font-weight:400;-webkit-text-stroke:0.13px #444444;">21/12/1999</div>
<div class="t" style="left:376.25px;top:281.55px;font-size:5.42px;color:#444444;font-weight:400;-webkit-text-stroke:0.13px #444444;">0985438668</div>
<div class="t" style="left:437.50px;top:281.55px;font-size:5.42px;color:#444444;font-weight:400;-webkit-text-stroke:0.13px #444444;">hangpvph07114@gmail.com</div>
<div class="t" style="left:528.25px;top:281.55px;font-size:5.42px;color:#444444;font-weight:400;-webkit-text-stroke:0.13px #444444;">Nữ</div>
<div class="t" style="left:569.25px;top:281.55px;font-size:5.42px;color:#3f9a70;font-weight:400;-webkit-text-stroke:0.08px #3f9a70;">Nam Linh</div>
<svg class="r" style="left:666.20px;top:280.83px;" width="5.5" height="5.5" viewBox="0 0 5.5 5.5"><path d="M2.75 0 V5.5 M0 2.75 H5.5" stroke="#3aa04a" stroke-width="1.3"/></svg>
<div class="t" style="left:725.75px;top:281.55px;font-size:5.42px;color:#444444;font-weight:400;-webkit-text-stroke:0.13px #444444;">09/11/2021 15:09</div>
<div class="r" style="left:123.00px;top:291.20px;width:663.25px;height:0.80px;background:#ededed;"></div>
<svg class="r" style="left:131.80px;top:297.37px;" width="3" height="4.4" viewBox="0 0 3 4.4"><path d="M0.5 0.5 L2.3 2.2 L0.5 3.9" stroke="#23806b" stroke-width="1.1" fill="none"/></svg>
<div class="r" style="left:147.50px;top:295.87px;width:7.50px;height:7.40px;background:#fff;box-sizing:border-box;border:0.6px solid #d3d3d3;border-radius:0.8px"></div>
<div class="t" style="left:167.50px;top:297.68px;font-size:5.42px;color:#444444;font-weight:400;-webkit-text-stroke:0.13px #444444;">21000204</div>
<div class="t" style="left:231.75px;top:297.68px;font-size:5.42px;color:#444444;font-weight:400;-webkit-text-stroke:0.13px #444444;">Contact 09.11 01</div>
<div class="t" style="left:313.75px;top:297.68px;font-size:5.42px;color:#444444;font-weight:400;-webkit-text-stroke:0.13px #444444;">21/12/1998</div>
<div class="t" style="left:376.25px;top:297.68px;font-size:5.42px;color:#444444;font-weight:400;-webkit-text-stroke:0.13px #444444;">0985438667</div>
<div class="t" style="left:437.50px;top:297.68px;font-size:5.42px;color:#444444;font-weight:400;-webkit-text-stroke:0.13px #444444;">hangpvph07114@gmail.com</div>
<div class="t" style="left:528.25px;top:297.68px;font-size:5.42px;color:#444444;font-weight:400;-webkit-text-stroke:0.13px #444444;">Nữ</div>
<div class="t" style="left:569.25px;top:297.68px;font-size:5.42px;color:#3f9a70;font-weight:400;-webkit-text-stroke:0.08px #3f9a70;">Nam Linh</div>
<svg class="r" style="left:666.20px;top:296.96px;" width="5.5" height="5.5" viewBox="0 0 5.5 5.5"><path d="M2.75 0 V5.5 M0 2.75 H5.5" stroke="#3aa04a" stroke-width="1.3"/></svg>
<div class="t" style="left:725.75px;top:297.68px;font-size:5.42px;color:#444444;font-weight:400;-webkit-text-stroke:0.13px #444444;">09/11/2021 14:57</div>
<div class="r" style="left:123.00px;top:307.63px;width:663.25px;height:16.13px;background:#f3f3f3;"></div>
<div class="r" style="left:123.00px;top:307.33px;width:663.25px;height:0.80px;background:#ededed;"></div>
<svg class="r" style="left:131.80px;top:313.50px;" width="3" height="4.4" viewBox="0 0 3 4.4"><path d="M0.5 0.5 L2.3 2.2 L0.5 3.9" stroke="#23806b" stroke-width="1.1" fill="none"/></svg>
<div class="r" style="left:147.50px;top:312.00px;width:7.50px;height:7.40px;background:#fff;box-sizing:border-box;border:0.6px solid #d3d3d3;border-radius:0.8px"></div>
<div class="t" style="left:167.50px;top:313.81px;font-size:5.42px;color:#444444;font-weight:400;-webkit-text-stroke:0.13px #444444;">21000203</div>
<div class="t" style="left:231.75px;top:313.81px;font-size:5.42px;color:#444444;font-weight:400;-webkit-text-stroke:0.13px #444444;">Phan Việt Hằng 09.11 03</div>
<div class="t" style="left:313.75px;top:313.81px;font-size:5.42px;color:#444444;font-weight:400;-webkit-text-stroke:0.13px #444444;">21/12/1998</div>
<div class="t" style="left:376.25px;top:313.81px;font-size:5.42px;color:#444444;font-weight:400;-webkit-text-stroke:0.13px #444444;">0985438666</div>
<div class="t" style="left:437.50px;top:313.81px;font-size:5.42px;color:#444444;font-weight:400;-webkit-text-stroke:0.13px #444444;">hangpvph07114@gmail.com</div>
<div class="t" style="left:528.25px;top:313.81px;font-size:5.42px;color:#444444;font-weight:400;-webkit-text-stroke:0.13px #444444;">Nữ</div>
<div class="t" style="left:569.25px;top:313.81px;font-size:5.42px;color:#3f9a70;font-weight:400;-webkit-text-stroke:0.08px #3f9a70;">Nam Linh</div>
<svg class="r" style="left:666.20px;top:313.09px;" width="5.5" height="5.5" viewBox="0 0 5.5 5.5"><path d="M2.75 0 V5.5 M0 2.75 H5.5" stroke="#3aa04a" stroke-width="1.3"/></svg>
<div class="t" style="left:725.75px;top:313.81px;font-size:5.42px;color:#444444;font-weight:400;-webkit-text-stroke:0.13px #444444;">09/11/2021 14:48</div>
<div class="r" style="left:123.00px;top:323.46px;width:663.25px;height:0.80px;background:#ededed;"></div>
<svg class="r" style="left:131.80px;top:329.62px;" width="3" height="4.4" viewBox="0 0 3 4.4"><path d="M0.5 0.5 L2.3 2.2 L0.5 3.9" stroke="#23806b" stroke-width="1.1" fill="none"/></svg>
<div class="r" style="left:147.50px;top:328.12px;width:7.50px;height:7.40px;background:#fff;box-sizing:border-box;border:0.6px solid #d3d3d3;border-radius:0.8px"></div>
<div class="t" style="left:167.50px;top:329.94px;font-size:5.42px;color:#444444;font-weight:400;-webkit-text-stroke:0.13px #444444;">21000201</div>
<div class="t" style="left:231.75px;top:329.94px;font-size:5.42px;color:#444444;font-weight:400;-webkit-text-stroke:0.13px #444444;">Phan Việt Hằng 09.11 01</div>
<div class="t" style="left:313.75px;top:329.94px;font-size:5.42px;color:#444444;font-weight:400;-webkit-text-stroke:0.13px #444444;">21/12/1998</div>
<div class="t" style="left:376.25px;top:329.94px;font-size:5.42px;color:#444444;font-weight:400;-webkit-text-stroke:0.13px #444444;">0985438665</div>
<div class="t" style="left:437.50px;top:329.94px;font-size:5.42px;color:#444444;font-weight:400;-webkit-text-stroke:0.13px #444444;">hangpvph07114@gmail.com</div>
<div class="t" style="left:528.25px;top:329.94px;font-size:5.42px;color:#444444;font-weight:400;-webkit-text-stroke:0.13px #444444;">Nữ</div>
<div class="t" style="left:569.25px;top:329.94px;font-size:5.42px;color:#3f9a70;font-weight:400;-webkit-text-stroke:0.08px #3f9a70;">Nam Linh</div>
<svg class="r" style="left:666.20px;top:329.22px;" width="5.5" height="5.5" viewBox="0 0 5.5 5.5"><path d="M2.75 0 V5.5 M0 2.75 H5.5" stroke="#3aa04a" stroke-width="1.3"/></svg>
<div class="t" style="left:725.75px;top:329.94px;font-size:5.42px;color:#444444;font-weight:400;-webkit-text-stroke:0.13px #444444;">09/11/2021 14:44</div>
<div class="r" style="left:123.00px;top:339.89px;width:663.25px;height:16.13px;background:#f3f3f3;"></div>
<div class="r" style="left:123.00px;top:339.59px;width:663.25px;height:0.80px;background:#ededed;"></div>
<svg class="r" style="left:131.80px;top:345.75px;" width="3" height="4.4" viewBox="0 0 3 4.4"><path d="M0.5 0.5 L2.3 2.2 L0.5 3.9" stroke="#23806b" stroke-width="1.1" fill="none"/></svg>
<div class="r" style="left:147.50px;top:344.25px;width:7.50px;height:7.40px;background:#fff;box-sizing:border-box;border:0.6px solid #d3d3d3;border-radius:0.8px"></div>
<div class="t" style="left:167.50px;top:346.07px;font-size:5.42px;color:#444444;font-weight:400;-webkit-text-stroke:0.13px #444444;">21000202</div>
<div class="t" style="left:231.75px;top:346.07px;font-size:5.42px;color:#444444;font-weight:400;-webkit-text-stroke:0.13px #444444;">Phan Việt Hằng 09.11 02</div>
<div class="t" style="left:313.75px;top:346.07px;font-size:5.42px;color:#444444;font-weight:400;-webkit-text-stroke:0.13px #444444;">21/12/1999</div>
<div class="t" style="left:376.25px;top:346.07px;font-size:5.42px;color:#444444;font-weight:400;-webkit-text-stroke:0.13px #444444;">0346677895</div>
<div class="t" style="left:437.50px;top:346.07px;font-size:5.42px;color:#444444;font-weight:400;-webkit-text-stroke:0.13px #444444;">hangpvph07114@gmail.com</div>
<div class="t" style="left:528.25px;top:346.07px;font-size:5.42px;color:#444444;font-weight:400;-webkit-text-stroke:0.13px #444444;">Nữ</div>
<div class="t" style="left:569.25px;top:346.07px;font-size:5.42px;color:#3f9a70;font-weight:400;-webkit-text-stroke:0.08px #3f9a70;">Nam Linh</div>
<svg class="r" style="left:666.20px;top:345.35px;" width="5.5" height="5.5" viewBox="0 0 5.5 5.5"><path d="M2.75 0 V5.5 M0 2.75 H5.5" stroke="#3aa04a" stroke-width="1.3"/></svg>
<div class="t" style="left:725.75px;top:346.07px;font-size:5.42px;color:#444444;font-weight:400;-webkit-text-stroke:0.13px #444444;">09/11/2021 14:44</div>
<div class="r" style="left:123.00px;top:355.72px;width:663.25px;height:0.80px;background:#ededed;"></div>
<svg class="r" style="left:131.80px;top:361.88px;" width="3" height="4.4" viewBox="0 0 3 4.4"><path d="M0.5 0.5 L2.3 2.2 L0.5 3.9" stroke="#23806b" stroke-width="1.1" fill="none"/></svg>
<div class="r" style="left:147.50px;top:360.38px;width:7.50px;height:7.40px;background:#fff;box-sizing:border-box;border:0.6px solid #d3d3d3;border-radius:0.8px"></div>
<div class="t" style="left:167.50px;top:362.20px;font-size:5.42px;color:#444444;font-weight:400;-webkit-text-stroke:0.13px #444444;">21000176</div>
<div class="t" style="left:231.75px;top:362.20px;font-size:5.42px;color:#444444;font-weight:400;-webkit-text-stroke:0.13px #444444;">Thuy Dung</div>
<div class="t" style="left:376.25px;top:362.20px;font-size:5.42px;color:#444444;font-weight:400;-webkit-text-stroke:0.13px #444444;">0981784039</div>
<div class="t" style="left:528.25px;top:362.20px;font-size:5.42px;color:#444444;font-weight:400;-webkit-text-stroke:0.13px #444444;">Nữ</div>
<div class="t" style="left:569.25px;top:362.20px;font-size:5.42px;color:#3f9a70;font-weight:400;-webkit-text-stroke:0.08px #3f9a70;">avc av</div>
<svg class="r" style="left:666.20px;top:361.48px;" width="5.5" height="5.5" viewBox="0 0 5.5 5.5"><path d="M2.75 0 V5.5 M0 2.75 H5.5" stroke="#3aa04a" stroke-width="1.3"/></svg>
<div class="t" style="left:725.75px;top:362.20px;font-size:5.42px;color:#444444;font-weight:400;-webkit-text-stroke:0.13px #444444;">05/11/2021 16:09</div>
<div class="r" style="left:123.00px;top:372.00px;width:355.50px;height:3.00px;background:#c2c2c2;border-radius:1.5px"></div>
<svg class="r" style="left:130.80px;top:383.00px;" width="3.2" height="3" viewBox="0 0 3.2 3"><path d="M0.4 0 V3 M3 0 L1 1.5 L3 3 Z" stroke="#666" stroke-width="0.5" fill="#666"/></svg>
<svg class="r" style="left:145.50px;top:383.00px;" width="2.5" height="3" viewBox="0 0 2.5 3"><path d="M2.3 0 L0.2 1.5 L2.3 3 Z" fill="#666"/></svg>
<div class="r" style="left:154.00px;top:379.00px;width:12.20px;height:12.50px;background:#43a647;"></div>
<div class="t" style="left:158.60px;top:382.51px;font-size:5.42px;color:#fff;font-weight:400;">1</div>
<div class="t" style="left:172.80px;top:382.51px;font-size:5.42px;color:#444;font-weight:400;">2</div>
<div class="t" style="left:186.80px;top:382.51px;font-size:5.42px;color:#444;font-weight:400;">3</div>
<div class="t" style="left:200.80px;top:382.51px;font-size:5.42px;color:#444;font-weight:400;">4</div>
<div class="t" style="left:214.80px;top:382.51px;font-size:5.42px;color:#444;font-weight:400;">5</div>
<div class="t" style="left:228.80px;top:382.51px;font-size:5.42px;color:#444;font-weight:400;">6</div>
<div class="t" style="left:242.80px;top:382.51px;font-size:5.42px;color:#444;font-weight:400;">7</div>
<div class="t" style="left:256.80px;top:382.51px;font-size:5.42px;color:#444;font-weight:400;">8</div>
<div class="t" style="left:270.80px;top:382.51px;font-size:5.42px;color:#444;font-weight:400;">9</div>
<div class="t" style="left:282.60px;top:382.51px;font-size:5.42px;color:#444;font-weight:400;">10</div>
<div class="t" style="left:298.00px;top:382.51px;font-size:5.42px;color:#aaa;font-weight:400;">...</div>
<svg class="r" style="left:312.00px;top:383.00px;" width="2.5" height="3" viewBox="0 0 2.5 3"><path d="M0.2 0 L2.3 1.5 L0.2 3 Z" fill="#444"/></svg>
<svg class="r" style="left:325.80px;top:383.00px;" width="3.2" height="3" viewBox="0 0 3.2 3"><path d="M2.8 0 V3 M0.2 0 L2.2 1.5 L0.2 3 Z" stroke="#444" stroke-width="0.5" fill="#444"/></svg>
<div class="t" style="left:647.50px;top:383.28px;font-size:10.3px;color:#c3c3c3;font-weight:400;">Activate Windows</div>
<div class="t" style="left:647.50px;top:397.14px;font-size:7.4px;color:#cbcbcb;font-weight:400;">Go to Settings to activate Windows.</div>
<div class="t" style="left:732.50px;top:382.71px;font-size:5.3px;color:#333;font-weight:700;letter-spacing:-0.1px">1 - 15 of 223 items</div>
<div class="r" style="left:130.00px;top:67.20px;width:124.20px;height:108.00px;background:#0f7b56;border-radius:0 0 2px 2px;box-shadow:0 1px 2px rgba(0,0,0,0.15)"></div>
<div class="t" style="left:160.10px;top:77.91px;font-size:5.9px;color:#f2faf5;font-weight:400;-webkit-text-stroke:0.18px #f2faf5;">Zalo Marketing</div>
<div class="t" style="left:160.10px;top:94.41px;font-size:5.9px;color:#f2faf5;font-weight:400;-webkit-text-stroke:0.18px #f2faf5;">SMS Marketing</div>
<div class="t" style="left:160.10px;top:110.71px;font-size:5.9px;color:#f2faf5;font-weight:400;-webkit-text-stroke:0.18px #f2faf5;">Email Marketing</div>
<div class="t" style="left:160.10px;top:127.81px;font-size:5.9px;color:#f2faf5;font-weight:400;-webkit-text-stroke:0.18px #f2faf5;">Facebook</div>
<div class="t" style="left:160.10px;top:144.01px;font-size:5.9px;color:#f2faf5;font-weight:400;-webkit-text-stroke:0.18px #f2faf5;">Marketing Automation</div>
<div class="t" style="left:160.10px;top:160.61px;font-size:5.9px;color:#f2faf5;font-weight:400;-webkit-text-stroke:0.18px #f2faf5;">Web Form</div>
<svg class="r" style="left:139.30px;top:76.80px;" width="8" height="6.5" viewBox="0 0 8 6.5"><path d="M0.5 2 H3 L7 0 V6.5 L3 4.5 H0.5 Z M1.5 4.5 L2.3 6.5 H3.3 L2.8 4.5 Z" fill="#f4fbf7"/></svg>
<svg class="r" style="left:139.30px;top:93.20px;" width="8" height="6.5" viewBox="0 0 8 6.5"><ellipse cx="3" cy="2.5" rx="3" ry="2.3" fill="#f4fbf7"/><ellipse cx="5.3" cy="4.3" rx="2.7" ry="2" fill="#f4fbf7"/></svg>
<svg class="r" style="left:139.50px;top:109.80px;" width="7" height="5.5" viewBox="0 0 7 5.5"><rect x="0" y="0" width="7" height="5.5" rx="0.5" fill="#f4fbf7"/><path d="M0.2 0.6 L3.5 3 L6.8 0.6" stroke="#0f7b56" stroke-width="0.6" fill="none"/></svg>
<svg class="r" style="left:139.50px;top:126.20px;" width="7" height="7" viewBox="0 0 7 7"><rect x="0" y="3" width="1.8" height="4" fill="#f4fbf7"/><path d="M2.3 3 L4 0 Q5 0 4.8 2.5 H6.8 V6.8 H2.3 Z" fill="#f4fbf7"/></svg>
<svg class="r" style="left:139.00px;top:142.80px;" width="8.5" height="6.5" viewBox="0 0 8.5 6.5"><circle cx="2.2" cy="2" r="1.5" fill="#f4fbf7"/><circle cx="5.5" cy="2.3" r="1.7" fill="#f4fbf7"/><path d="M0 6 Q0 3.8 2.2 3.8 Q4 3.8 4 6 Z M3 6.5 Q3 4.3 5.5 4.3 Q8 4.3 8 6.5 Z" fill="#f4fbf7"/></svg>
<svg class="r" style="left:140.20px;top:159.00px;" width="5.5" height="7.2" viewBox="0 0 5.5 7.2"><path d="M0 0 H3.8 L5.5 1.7 V7.2 H0 Z" fill="#f4fbf7"/><path d="M1 3.5 H4.5 M1 5 H4.5" stroke="#0f7b56" stroke-width="0.5"/></svg>
<div class="r" style="left:598.20px;top:208.90px;width:82.90px;height:66.70px;background:#fff;border-radius:2px;box-shadow:0 1px 4px rgba(0,0,0,0.18)"></div>
<svg class="r" style="left:606.00px;top:211.10px;" width="8.4" height="8.9" viewBox="0 0 8.4 8.9"><rect width="8.4" height="8.9" rx="0.8" fill="#55c07f"/><path d="M1.8 4.6 L3.6 6.4 L6.8 2.6" stroke="#fff" stroke-width="1.1" fill="none"/></svg>
<div class="t" style="left:618.40px;top:213.03px;font-size:5.4px;color:#5a9a7a;font-weight:400;">Lead mới</div>
<div class="r" style="left:606.00px;top:228.90px;width:8.40px;height:8.90px;background:#f7c07a;border-radius:0.8px"></div>
<div class="t" style="left:618.40px;top:230.93px;font-size:5.4px;color:#5a9a7a;font-weight:400;">Lead 123 1</div>
<div class="r" style="left:606.00px;top:246.70px;width:8.40px;height:8.90px;background:#e8a09c;border-radius:0.8px"></div>
<div class="t" style="left:618.40px;top:248.63px;font-size:5.4px;color:#5a9a7a;font-weight:400;">Thẻ 22.06 01</div>
<svg class="r" style="left:625.60px;top:265.60px;" width="5.5" height="5.5" viewBox="0 0 5.5 5.5"><path d="M2.75 0 V5.5 M0 2.75 H5.5" stroke="#3aa04a" stroke-width="1.3"/></svg>
<div class="t" style="left:635.60px;top:266.03px;font-size:5.4px;color:#5a9a7a;font-weight:400;">Tạo thẻ</div>
<div class="r" style="left:0.00px;top:424.60px;width:800.00px;height:25.40px;background:#fff;"></div>
</body></html>
